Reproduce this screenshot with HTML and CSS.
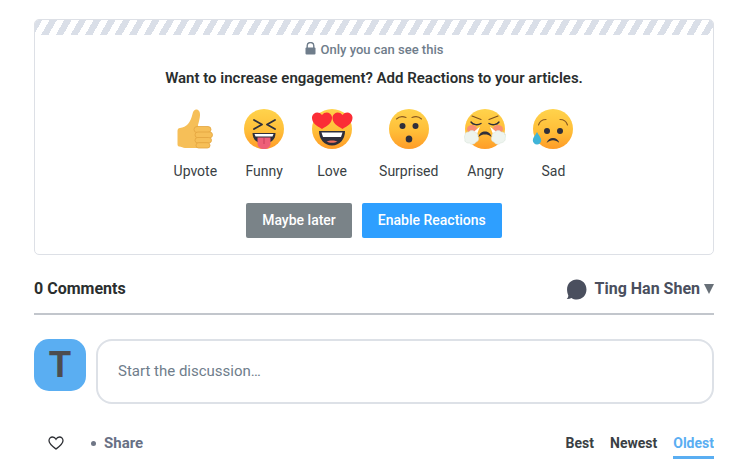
FILE: index.html
```html
<!DOCTYPE html>
<html lang="en">
<head>
    <meta charset="UTF-8">
    <title>Comments</title>
    <link rel="stylesheet" href="styles.css">
</head>
<body>
    <div class="card">
        <div class="stripes"></div>
        <p class="private">
            <svg class="lock" viewBox="0 0 11 13"><path d="M2.2 6V3.8a3.3 3.3 0 0 1 6.6 0V6" fill="none" stroke="#6f7d8b" stroke-width="1.4"/><rect x="0.5" y="5.6" width="10" height="7" rx="1" fill="#6f7d8b"/></svg>
            Only you can see this
        </p>
        <h2 class="promo">Want to increase engagement? Add Reactions to your articles.</h2>
        <div class="reactions">
            <div class="reaction">
                <svg class="emoji" viewBox="0 0 42 42">
                    <defs>
                        <linearGradient id="face" x1="0" y1="0" x2="0" y2="1"><stop offset="0" stop-color="#ffd34c"/><stop offset="0.55" stop-color="#ffbe38"/><stop offset="1" stop-color="#ff9c28"/></linearGradient>
                    </defs>
                    <path d="M6 19c3-.5 6-1.500 8-4 2-2.500 3.500-5.500 4.500-10 .5-3 2-4.500 3.800-4.500 2.500 0 4 2.500 3.700 6-.2 3-1 6-2 9.500L26 39H11c-2 0-3.500-1.500-6-1.500-1 0-1.500-1-1.500-2.500V22c0-2 1-3 2.500-3z" fill="#f6bf58"/>
                    <rect x="20" y="17.500" width="17" height="6" rx="3" fill="#f6bf58" stroke="#e3a43f" stroke-width=".8"/>
                    <rect x="21" y="23" width="17.500" height="5.800" rx="2.900" fill="#f6bf58" stroke="#e3a43f" stroke-width=".8"/>
                    <rect x="21" y="28.500" width="16.500" height="5.500" rx="2.700" fill="#f6bf58" stroke="#e3a43f" stroke-width=".8"/>
                    <rect x="22" y="33.700" width="14" height="5.300" rx="2.600" fill="#f6bf58" stroke="#e3a43f" stroke-width=".8"/>
                </svg>
                <span>Upvote</span>
            </div>
            <div class="reaction">
                <svg class="emoji" viewBox="0 0 42 42">
                    <circle cx="21" cy="20" r="20" fill="url(#face)"/>
                    <path d="M11 11l8 4.500-8 4.500M32 11l-8 4.500 8 4.500" fill="none" stroke="#2f2f3b" stroke-width="1.800" stroke-linecap="round" stroke-linejoin="round"/>
                    <path d="M9.500 24h23c0 6-4 10.500-11.500 10.500S9.500 30 9.500 24z" fill="#2f2f3b"/>
                    <path d="M11.500 25h19l-1 2.500h-17z" fill="#fff"/>
                    <path d="M14.500 28.500h13v6c0 3.500-2.800 5.500-6.500 5.500s-6.500-2-6.500-5.500z" fill="#ee5f78"/>
                    <path d="M21 29v6" stroke="#c93f5a" stroke-width="1"/>
                </svg>
                <span>Funny</span>
            </div>
            <div class="reaction">
                <svg class="emoji" viewBox="0 0 42 42">
                    <circle cx="21" cy="20" r="20" fill="url(#face)"/>
                    <path d="M8 22h26c0 8-5 14.500-13 14.500S8 30 8 22z" fill="#2f2f3b"/>
                    <path d="M10.500 23.500h21l-1.500 4.500H12z" fill="#fff"/>
                    <path d="M15.500 32.500c3-1.500 8-1.500 11 0-3 1.800-8 1.800-11 0z" fill="#f0705f"/>
                    <path d="M11 20C6 17 .5 14 1 8 2 3 8 2 11 6c3-4 9-3 10 2 .5 6-5 9-10 12z" fill="#fb2d36"/>
                    <path d="M31.500 20c-5-3-10.500-6-10-12 1-5 7-6 10-2 3-4 9-3 10 2 .5 6-5 9-10 12z" fill="#fb2d36"/>
                </svg>
                <span>Love</span>
            </div>
            <div class="reaction">
                <svg class="emoji" viewBox="0 0 42 42">
                    <circle cx="21" cy="20" r="20" fill="url(#face)"/>
                    <path d="M8.500 10c2.500-2.500 6-3 9.500-1.500M24 8.500c3.500-1.500 7-1 9.500 1.500" fill="none" stroke="#8a5a22" stroke-width="1.100" stroke-linecap="round"/>
                    <circle cx="14.500" cy="17" r="3" fill="#2f2f3b"/>
                    <circle cx="27.500" cy="17" r="3" fill="#2f2f3b"/>
                    <ellipse cx="21" cy="30" rx="3.300" ry="3.500" fill="#2f2f3b"/>
                </svg>
                <span>Surprised</span>
            </div>
            <div class="reaction">
                <svg class="emoji" viewBox="0 0 42 42">
                    <circle cx="21" cy="20" r="20" fill="url(#face)"/>
                    <ellipse cx="8" cy="20" rx="5" ry="4" fill="#f98f72"/>
                    <ellipse cx="34" cy="20" rx="5" ry="4" fill="#f98f72"/>
                    <path d="M8 7l9 3.500M34 7l-9 3.500" fill="none" stroke="#7a4e20" stroke-width="1.100" stroke-linecap="round"/>
                    <path d="M7 13c2 3 7 3.500 10 1.500M35 13c-2 3-7 3.500-10 1.500" fill="none" stroke="#2f2f3b" stroke-width="1.400" stroke-linecap="round"/>
                    <path d="M14.500 28c1-4 3.500-5.500 6.500-5.500s5.500 1.500 6.500 5.500c-2.500-2-4-2.500-6.500-2.500s-4 .5-6.500 2.500z" fill="#2f2f3b"/>
                    <path d="M16 17.500l-7 6 3.500 3zM26 17.500l7 6-3.500 3z" fill="#fff"/>
                    <path d="M1 26c0-2.500 2-3.500 4-3 1-2 5-2 6 .5 2 0 3.500 2 3 4 1.500 2 .5 5-2 5.500-1 2.500-5 3-6.500 1C2 34.500 0 32 1 30c-1-1-.7-3 0-4z" fill="#eef4ef" stroke="#d5e2d6" stroke-width=".5"/>
                    <path d="M41 26c0-2.500-2-3.500-4-3-1-2-5-2-6 .5-2 0-3.500 2-3 4-1.500 2-.5 5 2 5.500 1 2.500 5 3 6.500 1 3.500-.5 5.500-3 4.500-5 1-1 .7-3 0-4z" fill="#eef4ef" stroke="#d5e2d6" stroke-width=".5"/>
                </svg>
                <span>Angry</span>
            </div>
            <div class="reaction">
                <svg class="emoji" viewBox="0 0 42 42">
                    <circle cx="21" cy="20" r="20" fill="url(#face)"/>
                    <path d="M6.500 16c1-3 4-5.500 7.500-5.500M35.500 16c-1-3-4-5.500-7.500-5.500" fill="none" stroke="#8a5a22" stroke-width="1.200" stroke-linecap="round"/>
                    <circle cx="15" cy="22" r="3" fill="#2f2f3b"/>
                    <circle cx="28" cy="22" r="3" fill="#2f2f3b"/>
                    <path d="M14.500 34c1.500-3.500 3.500-5 6.500-5s5 1.500 6.500 5c-2.500-2-4-2.800-6.500-2.800s-4 .8-6.500 2.800z" fill="#2f2f3b"/>
                    <path d="M5 23c1.500 3 4.200 5.500 4.200 8.300a4.200 4.200 0 0 1-8.400 0C.8 28.500 3.500 26 5 23z" fill="#3fb4d8"/>
                </svg>
                <span>Sad</span>
            </div>
        </div>
        <div class="actions">
            <button class="btn btn-later">Maybe later</button>
            <button class="btn btn-enable">Enable Reactions</button>
        </div>
    </div>

    <div class="thread-head">
        <h3>0 Comments</h3>
        <div class="user">
            <svg class="bubble" viewBox="0 0 20 20"><path d="M10.300.5C15.500.5 19.500 4.500 19.500 10s-4 9.500-9.200 9.500c-2 0-3.700-.5-5-1.500-1.300.8-3 1.100-4.600 1 .9-.8 1.500-1.900 1.500-3.300C1.500 14 1 12.100 1 10 1 4.500 5 .5 10.300.5z" fill="#4a4f5e"/></svg>
            <span class="user-name">Ting Han Shen</span>
            <i class="caret"></i>
        </div>
    </div>

    <div class="composer">
        <div class="avatar">T</div>
        <div class="input">Start the discussion…</div>
    </div>

    <div class="footer">
        <div class="left">
            <svg class="heart" viewBox="0 0 16 14"><path d="M8 13C4 10 1 7.800 1 4.700 1 2.500 2.700 1 4.500 1 6 1 7.300 1.900 8 3.200 8.700 1.900 10 1 11.500 1 13.300 1 15 2.500 15 4.700 15 7.800 12 10 8 13z" fill="none" stroke="#2f3136" stroke-width="1.300"/></svg>
            <span class="dot"></span>
            <span class="share">Share</span>
        </div>
        <div class="sort">
            <span>Best</span>
            <span>Newest</span>
            <span class="active">Oldest</span>
        </div>
    </div>
</body>
</html>
```

FILE: styles.css
```css
body {
    margin: 0;
    padding: 19px 0 0 34px;
    width: 680px;
    background: #fff;
    font-family: Roboto, sans-serif;
    color: #2a2e2e;
}

.card {
    box-sizing: border-box;
    height: 236px;
    border: 1px solid #dde0e6;
    border-radius: 5px;
    overflow: hidden;
    display: flex;
    flex-direction: column;
    align-items: center;
}

.stripes {
    align-self: stretch;
    height: 15px;
    background: repeating-linear-gradient(120deg, #dadfe8 0, #dadfe8 6.300px, #fff 6.300px, #fff 12.700px);
}

.private {
    margin: 6px 0 0;
    height: 16px;
    display: flex;
    align-items: center;
    gap: 5px;
    font-size: 13px;
    font-weight: 500;
    color: #6f7d8b;
}

.lock {
    width: 11px;
    height: 13px;
    margin-bottom: 1px;
}

.promo {
    margin: 12px 0 0;
    font-size: 15px;
    line-height: 18px;
    font-weight: 600;
    color: #2a2e2e;
}

.reactions {
    margin-top: 22px;
    display: flex;
    gap: 26px;
}

.reaction {
    min-width: 42px;
    display: flex;
    flex-direction: column;
    align-items: center;
    gap: 11px;
    font-size: 14px;
    line-height: 18px;
    color: #3a3f44;
}

.emoji {
    width: 42px;
    height: 42px;
    display: block;
}

.actions {
    margin-top: 23px;
    display: flex;
    gap: 10px;
}

.btn {
    height: 35px;
    padding: 0 16px 1px;
    border: none;
    border-radius: 2px;
    font-family: inherit;
    font-size: 14px;
    font-weight: 500;
    color: #fff;
}

.btn-later {
    background: #7a8388;
}

.btn-enable {
    background: #2e9fff;
}

.thread-head {
    box-sizing: border-box;
    height: 60px;
    padding-top: 21px;
    border-bottom: 2px solid #c2c6cc;
    display: flex;
    justify-content: space-between;
    align-items: flex-start;
}

.thread-head h3 {
    margin: 0;
    font-size: 16px;
    line-height: 26px;
    font-weight: 700;
    color: #2a2e2e;
}

.user {
    height: 26px;
    display: flex;
    align-items: center;
    gap: 8px;
    font-size: 16px;
    font-weight: 700;
    color: #4a4f5e;
}

.user-name {
    margin-bottom: 2px;
}

.bubble {
    width: 21px;
    height: 21px;
}

.caret {
    margin-left: -4px;
    border-left: 5px solid transparent;
    border-right: 5px solid transparent;
    border-top: 10px solid #687078;
}

.composer {
    margin-top: 24px;
    display: flex;
    align-items: flex-start;
    gap: 10px;
}

.avatar {
    flex: none;
    width: 52px;
    height: 52px;
    border-radius: 15px;
    background: #5aaef2;
    color: #4c4c4f;
    font-family: "Liberation Sans", sans-serif;
    font-size: 36px;
    font-weight: 700;
    line-height: 51px;
    text-align: center;
}

.input {
    flex: 1;
    box-sizing: border-box;
    height: 65px;
    padding: 0 20px;
    border: 2px solid #dde1e7;
    border-radius: 16px;
    font-size: 15px;
    line-height: 60px;
    color: #6f7d8b;
}

.footer {
    margin-top: 26px;
    display: flex;
    justify-content: space-between;
    align-items: flex-start;
    font-size: 14px;
    font-weight: 700;
    line-height: 26px;
}

.left {
    height: 26px;
    display: flex;
    align-items: center;
}

.heart {
    width: 16px;
    height: 14px;
    margin-left: 14px;
}

.dot {
    width: 5px;
    height: 5px;
    margin-left: 27px;
    border-radius: 50%;
    background: #6f7686;
}

.share {
    margin-left: 8px;
    font-size: 15px;
    color: #687084;
}

.sort {
    display: flex;
    gap: 16px;
    color: #3a3f44;
}

.sort .active {
    color: #5aaef2;
    height: 26px;
    border-bottom: 3px solid #5aaef2;
}
```
